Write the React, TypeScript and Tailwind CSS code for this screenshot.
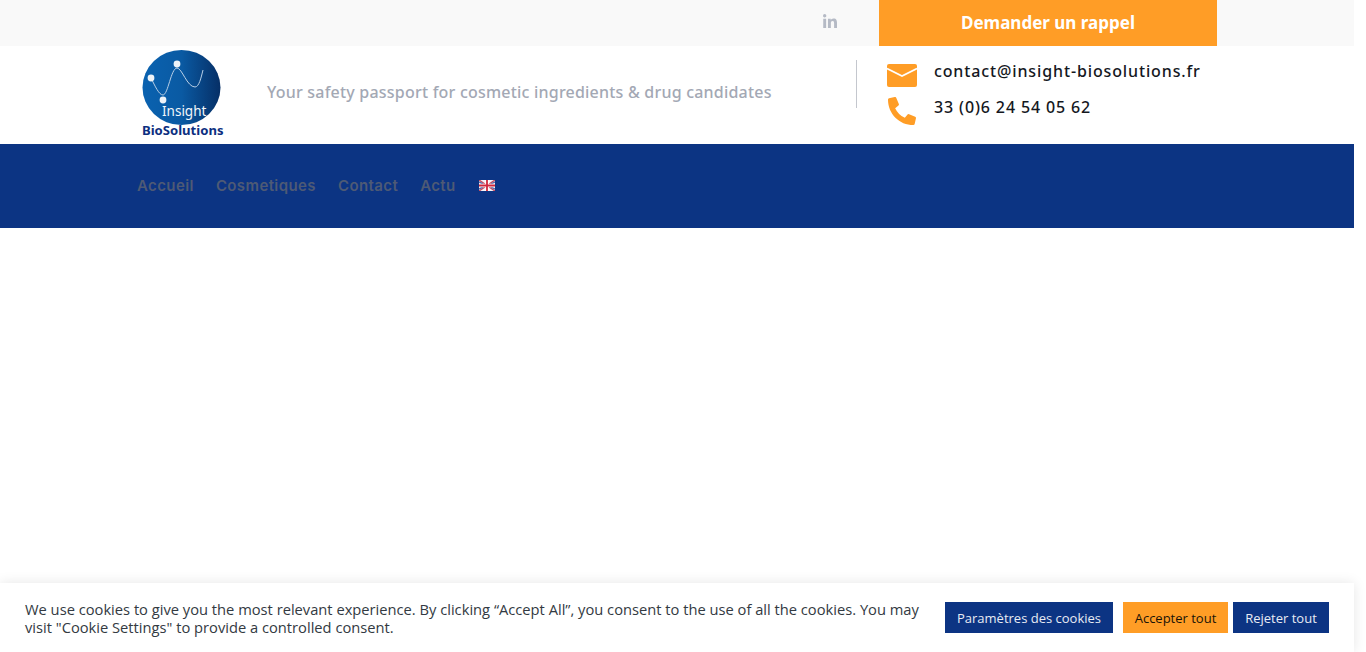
import { FaLinkedinIn, FaPhoneAlt } from "react-icons/fa";

function Logo() {
  return (
    <svg width="90" height="92" viewBox="0 0 90 92" className="shrink-0">
      <defs>
        <linearGradient id="logo-blue" x1="0" x2="1" y1="0" y2="0">
          <stop offset="0" stopColor="#0a62b0" />
          <stop offset="0.5" stopColor="#0a5aa3" />
          <stop offset="1" stopColor="#062f66" />
        </linearGradient>
      </defs>
      <ellipse cx="41.5" cy="39.5" rx="39" ry="37.5" fill="url(#logo-blue)" />
      <path
        d="M11 30 C15 38 19 47 23 47 C28 47 31 20 37 20 C42 20 47 39 55 39 C59 39 61 30 63 22"
        fill="none"
        stroke="#b9cfe6"
        strokeWidth="1"
      />
      <circle cx="11" cy="30" r="3.4" fill="#eef3f8" />
      <circle cx="37" cy="16" r="3.4" fill="#eef3f8" />
      <circle cx="23" cy="52" r="3.4" fill="#eef3f8" />
      <text x="22" y="68" fill="#f2f6fa" fontSize="13.5" fontFamily="'Noto Sans', sans-serif">
        Insight
      </text>
      <text x="2" y="87" fill="#0c2f80" fontSize="13.1" fontWeight="700" fontFamily="'Noto Sans', sans-serif">
        BioSolutions
      </text>
    </svg>
  );
}

function Flag() {
  return (
    <svg width="16" height="11" viewBox="0 0 16 11" className="-mt-[2px] ml-px shrink-0">
      <rect width="16" height="11" fill="#f4f4f8" />
      <path d="M0 0 L16 11 M16 0 L0 11" stroke="#c8465a" strokeWidth="1.4" />
      <path d="M0 2 L4 4 M12 7 L16 9 M12 4 L16 2 M0 9 L4 7" stroke="#5a6aa8" strokeWidth="1.4" />
      <path d="M8 0 V11 M0 5.5 H16" stroke="#fff" strokeWidth="3.4" />
      <path d="M8 0 V11 M0 5.5 H16" stroke="#d0263c" strokeWidth="1.8" />
    </svg>
  );
}

function MailIcon() {
  return (
    <svg width="30" height="23" viewBox="0 0 30 23" className="shrink-0">
      <rect width="30" height="23" rx="2" fill="#ff9d26" />
      <path d="M0 4.5 L15 12 L30 4.5" fill="none" stroke="#fff" strokeWidth="1.8" />
    </svg>
  );
}

export default function App() {
  return (
    <div className="relative h-[652px] w-full overflow-hidden bg-white font-['Open_Sans',sans-serif]">
      <div className="w-[1354px]">
        <div className="flex h-[46px] items-stretch bg-[#f9f9f9] pl-[822px]">
          <div className="flex w-[57px] items-center pb-[2px]">
            <FaLinkedinIn size={16} color="#b5bac5" />
          </div>
          <div className="flex w-[338px] items-center justify-center bg-[#ff9d26] text-[17px] font-bold text-white font-['Noto_Sans',sans-serif]">
            Demander un rappel
          </div>
        </div>

        <div className="flex h-[98px] items-start pl-[140px]">
          <div className="mt-[2px]">
            <Logo />
          </div>
          <p className="mt-[34px] ml-[37px] w-[589px] text-[16px] leading-[24px] font-medium tracking-[0.21px] text-[#a3a8b4] font-['Noto_Sans',sans-serif]">
            Your safety passport for cosmetic ingredients &amp; drug candidates
          </p>
          <div className="mt-[14px] h-[48px] w-px bg-[#c4c7ce]" />
          <div className="mt-[18px] ml-[30px] flex w-[30px] flex-col items-center gap-[10px] text-[#ff9d26]">
            <MailIcon />
            <FaPhoneAlt size={28} color="#ff9d26" />
          </div>
          <div className="mt-[14px] ml-[17px] flex flex-col gap-[14px] text-[16px] leading-[22px] font-medium tracking-[0.87px] text-[#15181e] font-['Noto_Sans',sans-serif]">
            <span>contact@insight-biosolutions.fr</span>
            <span>33 (0)6 24 54 05 62</span>
          </div>
        </div>

        <nav className="flex h-[84px] items-center gap-[22px] bg-[#0c3483] pl-[137px] text-[15px] font-semibold tracking-[0.4px] text-[#4e5a75] font-['Inter',sans-serif]">
          <span>Accueil</span>
          <span>Cosmetiques</span>
          <span>Contact</span>
          <span>Actu</span>
          <Flag />
        </nav>
      </div>

      <div className="absolute bottom-0 left-0 flex h-[69px] w-[1354px] items-center bg-white pl-[25px] shadow-[0_0_12px_rgba(0,0,0,0.1)]">
        <p className="w-[920px] pr-[2px] text-[14.7px] leading-[18px] text-[#333a42]">
          We use cookies to give you the most relevant experience. By clicking “Accept All”, you consent to the use of all the cookies. You may visit "Cookie Settings" to provide a controlled consent.
        </p>
        <div className="flex items-center text-[13px]">
          <button className="h-[31px] w-[168px] bg-[#0c3483] pt-[2px] text-[#e8ebf3]">Paramètres des cookies</button>
          <button className="ml-[10px] h-[31px] w-[105px] bg-[#ff9d26] pt-[2px] text-[#1a1408]">Accepter tout</button>
          <button className="ml-[5px] h-[31px] w-[96px] bg-[#0c3483] pt-[2px] text-[#e8ebf3]">Rejeter tout</button>
        </div>
      </div>
    </div>
  );
}
